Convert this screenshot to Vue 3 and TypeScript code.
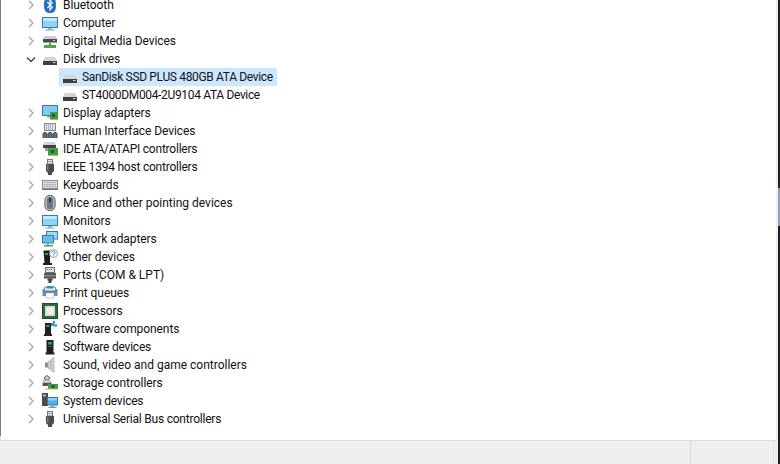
<script setup lang="ts">
interface Row {
  label: string
  icon: string
  state: 'closed' | 'open' | 'child'
  selected?: boolean
  fit?: 'tight' | 'tighter' | 'loose'
}
const rows: Row[] = [
  { label: 'Bluetooth', icon: 'bluetooth', state: 'closed' },
  { label: 'Computer', icon: 'monitor', state: 'closed' },
  { label: 'Digital Media Devices', icon: 'media', state: 'closed' },
  { label: 'Disk drives', icon: 'disk', state: 'open' },
  { label: 'SanDisk SSD PLUS 480GB ATA Device', icon: 'disk', state: 'child', selected: true, fit: 'tighter' },
  { label: 'ST4000DM004-2U9104 ATA Device', icon: 'disk', state: 'child', fit: 'tighter' },
  { label: 'Display adapters', icon: 'display', state: 'closed' },
  { label: 'Human Interface Devices', icon: 'hid', state: 'closed' },
  { label: 'IDE ATA/ATAPI controllers', icon: 'ide', state: 'closed', fit: 'tight' },
  { label: 'IEEE 1394 host controllers', icon: 'plug', state: 'closed', fit: 'tight' },
  { label: 'Keyboards', icon: 'keyboard', state: 'closed' },
  { label: 'Mice and other pointing devices', icon: 'mouse', state: 'closed', fit: 'loose' },
  { label: 'Monitors', icon: 'monitor', state: 'closed', fit: 'loose' },
  { label: 'Network adapters', icon: 'network', state: 'closed' },
  { label: 'Other devices', icon: 'other', state: 'closed' },
  { label: 'Ports (COM & LPT)', icon: 'port', state: 'closed', fit: 'loose' },
  { label: 'Print queues', icon: 'printer', state: 'closed' },
  { label: 'Processors', icon: 'cpu', state: 'closed' },
  { label: 'Software components', icon: 'swcomp', state: 'closed' },
  { label: 'Software devices', icon: 'swdev', state: 'closed', fit: 'tight' },
  { label: 'Sound, video and game controllers', icon: 'sound', state: 'closed', fit: 'loose' },
  { label: 'Storage controllers', icon: 'storage', state: 'closed' },
  { label: 'System devices', icon: 'system', state: 'closed', fit: 'tight' },
  { label: 'Universal Serial Bus controllers', icon: 'plug', state: 'closed', fit: 'tight' },
]
</script>

<template>
  <div class="window">
    <svg class="defs" width="0" height="0" aria-hidden="true">
      <symbol id="bluetooth" viewBox="0 0 16 16">
        <path d="M8 0C3.500 0 2 2.500 2 8s1.500 8 6 8 6-2.500 6-8-1.500-8-6-8z" fill="#1f6fc4" />
        <path d="M5.300 5l5 5.200L7.900 13V3l2.400 2.800-5 5.200" fill="none" stroke="#fff" stroke-width="1.100" />
      </symbol>
      <symbol id="monitor" viewBox="0 0 16 16">
        <rect x="0.500" y="2.500" width="15" height="10" fill="#8fd3f4" stroke="#2f7fae" />
        <rect x="1" y="3" width="14" height="3" fill="#c2e9fa" />
        <rect x="6" y="13" width="4" height="1.500" fill="#9fb4c0" />
        <rect x="3.500" y="14.500" width="9" height="1" fill="#7f99a8" />
      </symbol>
      <symbol id="media" viewBox="0 0 16 16">
        <path d="M2.500 3h11l1.500 3H1z" fill="#d0d0d0" />
        <rect x="1" y="6" width="14" height="3.500" fill="#4a4a4a" />
        <rect x="11" y="7" width="2" height="1" fill="#cfcfcf" />
        <path d="M7 9.500h2V12h5v3H2v-3h5z" fill="#49a84a" />
      </symbol>
      <symbol id="disk" viewBox="0 0 16 16">
        <path d="M3 6h10l2 4H1z" fill="#d4d4d4" />
        <rect x="1" y="10" width="14" height="4" fill="#3f3f3f" />
        <rect x="11" y="11" width="2.500" height="1" fill="#d8d8d8" />
      </symbol>
      <symbol id="display" viewBox="0 0 16 16">
        <rect x="0.500" y="0.500" width="15" height="10" fill="#7fcbee" stroke="#2f7fae" />
        <rect x="5" y="11" width="5" height="1.500" fill="#8fa3ad" />
        <rect x="8" y="7" width="8" height="7" fill="#3f9a52" />
        <rect x="10" y="9" width="3" height="3" fill="#24592f" />
        <rect x="8" y="14" width="8" height="1" fill="#d6b13e" />
      </symbol>
      <symbol id="hid" viewBox="0 0 16 16">
        <rect x="2.500" y="0.500" width="11" height="7" fill="#dfe3e6" stroke="#7f8b92" />
        <path d="M4 2h8M4 4h8M4 6h8" stroke="#7f8b92" stroke-dasharray="1 1" />
        <path d="M1 15V10.500L3 9l2 1.500V15M6 15v-4.500L8 9l2 1.500V15M11 15v-4.500L13 9l2 1.500V15" fill="#5f6f7a" stroke="#3b4750" />
      </symbol>
      <symbol id="ide" viewBox="0 0 16 16">
        <path d="M2.500 1h10l1.500 3H1z" fill="#d4d4d4" />
        <rect x="1" y="4" width="13" height="3" fill="#444" />
        <rect x="6" y="7" width="10" height="7" fill="#3f9a52" />
        <rect x="9" y="9" width="3" height="3" fill="#24592f" />
        <rect x="6" y="14" width="10" height="1" fill="#d6b13e" />
        <rect x="3" y="7" width="3" height="3" fill="#9a9a9a" />
      </symbol>
      <symbol id="plug" viewBox="0 0 16 16">
        <rect x="5.500" y="0.500" width="5" height="4.500" fill="#e8e8e8" stroke="#777" />
        <rect x="6.500" y="2" width="1" height="1" fill="#555" />
        <rect x="8.500" y="2" width="1" height="1" fill="#555" />
        <path d="M4 5h8v7l-2 2v2H6v-2l-2-2z" fill="#4b4b4b" />
        <rect x="5" y="5.500" width="1.500" height="6" fill="#7d7d7d" />
      </symbol>
      <symbol id="keyboard" viewBox="0 0 16 16">
        <rect x="0.500" y="3.500" width="15" height="8" fill="#dcdfe1" stroke="#8a8f93" />
        <path d="M2 5.500h12M2 7.500h12M2 9.500h12" stroke="#9aa0a4" stroke-dasharray="1 0.600" />
        <rect x="0" y="12" width="16" height="1" fill="#6f7478" />
      </symbol>
      <symbol id="mouse" viewBox="0 0 16 16">
        <rect x="3" y="0.500" width="10" height="15" rx="4.500" fill="#f4f4f4" stroke="#3a424b" />
        <rect x="4.500" y="1.500" width="7" height="13" rx="3.500" fill="#6d7884" />
        <rect x="7" y="3" width="2" height="4.500" rx="1" fill="#2f363e" />
      </symbol>
      <symbol id="network" viewBox="0 0 16 16">
        <rect x="4.500" y="0.500" width="11" height="7.500" fill="#9ddcf7" stroke="#2f7fae" />
        <rect x="0.500" y="4.500" width="11" height="7.500" fill="#63bfea" stroke="#2f7fae" />
        <rect x="5" y="12" width="2" height="2" fill="#8fa3ad" />
        <rect x="2" y="14" width="9" height="1.500" fill="#49a84a" />
      </symbol>
      <symbol id="other" viewBox="0 0 16 16">
        <path d="M1.500 1.500H8V14h2v2H1v-2h1.500z" fill="#1d1d1d" />
        <rect x="3" y="4" width="3" height="2" fill="#2f9e4f" />
        <circle cx="11.500" cy="4.500" r="4" fill="#eef3f6" stroke="#9aa7af" />
        <path d="M10 3.500a1.500 1.500 0 1 1 2 1.400c-.5.200-.5.500-.5 1M11.500 6.500v.7" fill="none" stroke="#5e7f93" stroke-width="0.800" />
      </symbol>
      <symbol id="port" viewBox="0 0 16 16">
        <rect x="3.500" y="0.500" width="9" height="5" fill="#e2e2e2" stroke="#6e6e6e" />
        <path d="M5 2.500h6" stroke="#555" stroke-dasharray="1 1" />
        <rect x="2" y="6" width="12" height="5.500" fill="#555" />
        <rect x="2" y="8" width="12" height="1.500" fill="#8a8a8a" />
        <path d="M5.500 11.500h5v2h-1v2.500h-3v-2.500h-1z" fill="#404040" />
      </symbol>
      <symbol id="printer" viewBox="0 0 16 16">
        <rect x="0.500" y="4" width="15" height="7" fill="#6a8fa5" />
        <path d="M3 2h10l1 4H2z" fill="#e2eef4" stroke="#2f6f93" stroke-width="0.800" />
        <rect x="5" y="1" width="6" height="2.500" fill="#2f8ab8" />
        <rect x="4" y="8" width="8" height="5" fill="#fff" stroke="#9aa" stroke-width="0.600" />
      </symbol>
      <symbol id="cpu" viewBox="0 0 16 16">
        <rect x="0.500" y="0.500" width="15" height="15" fill="#2e6b3d" stroke="#1f4d2b" />
        <rect x="3" y="3" width="10" height="10" fill="#d8dcd8" />
        <rect x="4.500" y="4.500" width="7" height="7" fill="#eef0ee" />
      </symbol>
      <symbol id="swcomp" viewBox="0 0 16 16">
        <path d="M3 2h6v11h1v2H2v-2h1z" fill="#202020" />
        <rect x="4" y="4" width="3.500" height="2" fill="#2f9e4f" />
        <rect x="9" y="2" width="3" height="3" fill="#2f8ed0" />
        <rect x="12" y="3" width="3" height="3" fill="#57b0e6" />
        <rect x="11" y="0" width="2" height="2.500" fill="#2f8ed0" />
      </symbol>
      <symbol id="swdev" viewBox="0 0 16 16">
        <path d="M4.500 1h7v12.500h1v2h-9v-2h1z" fill="#202020" />
        <rect x="6" y="3" width="4" height="2.500" fill="#2f9e4f" />
        <rect x="6" y="7" width="4" height="1" fill="#555" />
      </symbol>
      <symbol id="sound" viewBox="0 0 16 16">
        <rect x="3" y="5.500" width="3" height="5" fill="#8b8b8b" />
        <path d="M6 5L12 0.500V15.500L6 11z" fill="#d2d2d2" stroke="#a0a0a0" stroke-width="0.600" />
        <path d="M9 3.500V12.500" stroke="#adadad" />
      </symbol>
      <symbol id="storage" viewBox="0 0 16 16">
        <path d="M5 0.500l3 2.500-3 2.500-3-2.500z" fill="#d8d8d8" stroke="#555" />
        <path d="M1.500 5h6l2 3h-8z" fill="#d4d4d4" stroke="#777" stroke-width="0.500" />
        <rect x="0.500" y="8" width="9" height="3" fill="#555" />
        <rect x="6" y="9" width="10" height="5" fill="#3f9a52" />
        <rect x="9.500" y="10" width="3" height="3" fill="#24592f" />
        <rect x="3" y="13.500" width="13" height="1" fill="#d6b13e" />
      </symbol>
      <symbol id="system" viewBox="0 0 16 16">
        <rect x="0" y="0" width="6" height="13" fill="#4b4b4b" />
        <rect x="1" y="1.500" width="3" height="2" fill="#7fc2e8" />
        <rect x="5.500" y="4.500" width="10" height="7.500" fill="#4db0e6" stroke="#2f7fae" />
        <rect x="6" y="5" width="9" height="2.500" fill="#8cd1f2" />
        <rect x="8.500" y="12.500" width="4" height="1.500" fill="#8fa3ad" />
        <rect x="6.500" y="14" width="8" height="1" fill="#7f99a8" />
      </symbol>
    </svg>

    <div class="main">
      <ul class="tree">
        <li
          v-for="row in rows"
          :key="row.label"
          class="row"
          :class="{ child: row.state === 'child' }"
        >
          <span class="toggle">
            <svg v-if="row.state === 'closed'" width="9" height="10" viewBox="0 0 9 10">
              <path d="M2 1l4 4-4 4" fill="none" stroke="#a6a6a6" stroke-width="1.300" />
            </svg>
            <svg v-else-if="row.state === 'open'" width="10" height="9" viewBox="0 0 10 9">
              <path d="M1 2.500l4 4 4-4" fill="none" stroke="#404040" stroke-width="1.300" />
            </svg>
          </span>
          <span class="item" :class="{ selected: row.selected }">
            <svg class="icon" width="16" height="16"><use :href="`#${row.icon}`" /></svg>
            <span class="label" :class="row.fit">{{ row.label }}</span>
          </span>
        </li>
      </ul>
    </div>

    <div class="status">
      <div class="cell wide"></div>
      <div class="cell mid"></div>
      <div class="cell"></div>
    </div>
  </div>
</template>

<style scoped>
.window {
  width: 780px;
  height: 464px;
  display: flex;
  flex-direction: column;
  overflow: hidden;
  background: #f0f0f0;
  font-family: "Roboto", "Open Sans", sans-serif;
  position: relative;
}
.defs {
  position: absolute;
}
.main {
  height: 440px;
  margin-right: 4px;
  padding-left: 1px;
  background: linear-gradient(#7d7d7d 436px, #e2e2e2 436px) 0 0 / 1px 100% no-repeat, #fff;
  border-bottom: 1px solid #dcdcdc;
  overflow: hidden;
}
.tree {
  list-style: none;
  margin: -4px 0 0;
  padding: 0 0 0 25px;
}
.row {
  height: 18px;
  display: flex;
  align-items: center;
}
.toggle {
  width: 10px;
  height: 18px;
  display: flex;
  align-items: center;
  justify-content: center;
  margin-right: 6px;
  flex: none;
}
.child .toggle {
  margin-right: 23px;
}
.item {
  height: 18px;
  display: flex;
  align-items: center;
  padding-right: 4px;
}
.child .item {
  padding-left: 3px;
}
.selected {
  background: #cce8ff;
}
.icon {
  flex: none;
  margin-right: 5px;
  display: block;
}
.child .icon {
  margin-right: 4px;
}
.label {
  font-size: 12px;
  line-height: 18px;
  color: #111;
  white-space: nowrap;
  letter-spacing: -0.08px;
}
.label.loose {
  letter-spacing: 0;
}
.label.tight {
  letter-spacing: -0.22px;
}
.label.tighter {
  letter-spacing: -0.34px;
}
.status {
  flex: 1;
  display: flex;
  margin-right: 2px;
  background: #efefef;
}
.cell {
  flex: none;
}
.wide {
  width: 690px;
  border-right: 1px solid #d9d9d9;
}
.mid {
  width: 82px;
  border-right: 1px solid #e2e2e2;
}
.window::after {
  content: "";
  position: absolute;
  top: 0;
  bottom: 0;
  right: 0;
  width: 2px;
  background: linear-gradient(#1f1f1f 0 188px, #8f9db5 188px 226px, #1f1f1f 226px);
}
</style>
